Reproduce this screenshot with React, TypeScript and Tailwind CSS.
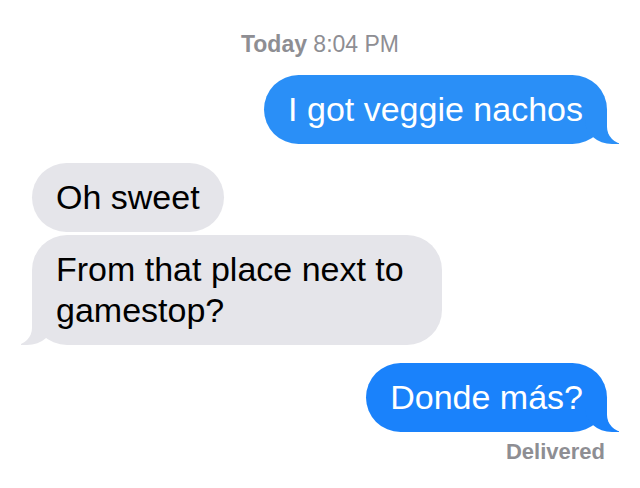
import React from "react";

function Sent({ text, color, className = "" }: { text: string; color: string; className?: string }) {
  return (
    <div className={`relative rounded-[35px] px-[24px] py-[14px] text-[34px] leading-[41px] text-white ${color} ${className}`}>
      <div className={`absolute bottom-0 right-[-12px] w-[34px] h-[34px] rounded-bl-[27px_24px] ${color}`} />
      <div className="absolute bottom-0 right-[-44px] w-[44px] h-[34px] bg-white rounded-bl-[17px]" />
      <span className="relative">{text}</span>
    </div>
  );
}

export default function App() {
  return (
    <div className="w-[640px] h-[488px] bg-white flex flex-col overflow-hidden font-['Liberation_Sans',Arial,sans-serif]">
      <div className="pt-[31px] text-center text-[23px] leading-[26px] text-[#8e8e93]">
        <span className="font-bold">Today</span> 8:04 PM
      </div>

      <div className="mt-[18px] flex justify-end pr-[33px]">
        <Sent text="I got veggie nachos" color="bg-[#2a8ff7]" />
      </div>

      <div className="mt-[19px] flex flex-col items-start pl-[32px] gap-[3px]">
        <div className="rounded-[35px] px-[24px] py-[14px] text-[34px] leading-[41px] text-black bg-[#e5e5ea]">
          Oh sweet
        </div>
        <div className="relative w-[410px] rounded-[35px] px-[24px] py-[14px] text-[34px] leading-[41px] text-black bg-[#e5e5ea]">
          <div className="absolute bottom-0 left-[-11px] w-[33px] h-[34px] rounded-br-[27px_24px] bg-[#e5e5ea]" />
          <div className="absolute bottom-0 left-[-44px] w-[44px] h-[34px] bg-white rounded-br-[17px]" />
          <span className="relative">From that place next to gamestop?</span>
        </div>
      </div>

      <div className="mt-[18px] flex justify-end pr-[33px]">
        <Sent text="Donde más?" color="bg-[#1a82fb]" />
      </div>

      <div className="mt-[7px] pr-[35px] text-right text-[22px] leading-[26px] font-bold text-[#8e8e93]">
        Delivered
      </div>
    </div>
  );
}
